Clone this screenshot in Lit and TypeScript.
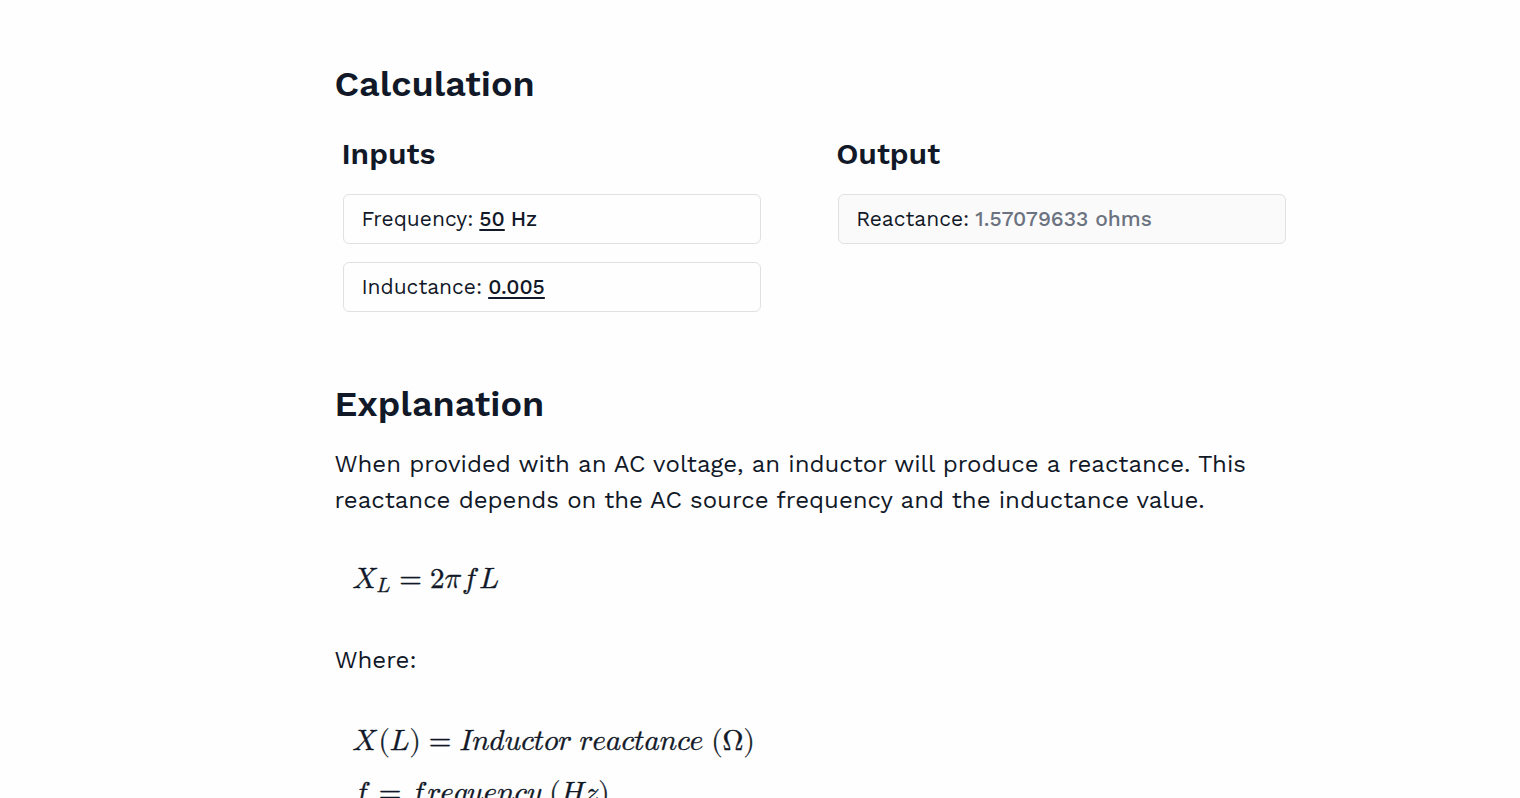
import { LitElement, html, css } from "lit";
import { customElement, state } from "lit/decorators.js";

const MATHML = "http://www.w3.org/1998/Math/MathML";

/** Builds an element in the MathML namespace. */
function mathElement(name: string, attributes: Record<string, string> = {}, text = "") {
  const element = document.createElementNS(MATHML, name);
  for (const [key, value] of Object.entries(attributes)) element.setAttribute(key, value);
  element.textContent = text;
  return element;
}

/** Sets a word as a run of italic identifiers; "f" gets room for its overhang. */
function word(text: string) {
  const row = mathElement("mrow");
  for (const letter of text) {
    if (letter === "f") row.append(mathElement("mspace", { width: "1px" }));
    row.append(mathElement("mi", {}, letter));
    if (letter === "f") row.append(mathElement("mspace", { width: "3px" }));
  }
  return row;
}

@customElement("app-root")
export class AppRoot extends LitElement {
  @state() private frequency = "50";
  @state() private inductance = "0.005";

  static styles = css`
    :host {
      display: block;
      min-height: 100vh;
      background: #fefefe;
      color: #111827;
      font-family: "Work Sans", Inter, "Liberation Sans", sans-serif;
      font-size: 24px;
      line-height: 36px;
    }
    main {
      padding: 60px 15% 40px 22%;
    }
    h2,
    h3,
    p {
      margin: 0;
    }
    h2 {
      font-size: 36px;
      line-height: 48px;
      font-weight: 600;
    }
    h3 {
      margin-bottom: 20px;
      font-size: 30px;
      line-height: 40px;
      font-weight: 600;
    }
    .calculation {
      display: grid;
      grid-template-columns: 14fr 15fr;
      column-gap: 73px;
      padding: 26px 4px 0 7px;
      margin-bottom: 68px;
    }
    .fields {
      display: flex;
      flex-direction: column;
      gap: 18px;
      margin: 0 2px;
    }
    .field {
      display: flex;
      align-items: center;
      gap: 6px;
      padding: 9px 17px;
      border: 1px solid #e0e1e4;
      border-radius: 6px;
      font-size: 21px;
      line-height: 30px;
    }
    .result {
      background: #fafafa;
    }
    .field input {
      field-sizing: content;
      min-width: 0;
      padding: 0;
      border: 0;
      outline: 0;
      background: none;
      color: inherit;
      font: inherit;
      font-weight: 500;
      text-decoration: underline;
      text-decoration-thickness: 2px;
      text-underline-offset: 3px;
    }
    .unit {
      font-weight: 500;
    }
    .field output {
      color: #6b7280;
      font-weight: 500;
    }
    .intro {
      padding-top: 18px;
    }
    .formulas {
      display: flex;
      flex-direction: column;
      align-items: flex-start;
      gap: 22px;
      padding: 50px 18px 54px;
      font-size: 29px;
    }
    .formulas math {
      font-family: "Latin Modern Math", "Liberation Serif", math;
      -webkit-text-stroke: 0.4px currentColor;
    }
  `;

  private get reactance() {
    const value = 2 * Math.PI * Number(this.frequency) * Number(this.inductance);
    return Number.isFinite(value) ? value.toFixed(8) : "–";
  }

  render() {
    return html`
      <main>
        <section>
          <h2>Calculation</h2>
          <div class="calculation">
            <div>
              <h3>Inputs</h3>
              <div class="fields">
                <div class="field">
                  <label for="frequency">Frequency:</label>
                  <input
                    id="frequency"
                    inputmode="decimal"
                    .value=${this.frequency}
                    @input=${(e: InputEvent) => (this.frequency = (e.target as HTMLInputElement).value)}
                  />
                  <span class="unit">Hz</span>
                </div>
                <div class="field">
                  <label for="inductance">Inductance:</label>
                  <input
                    id="inductance"
                    inputmode="decimal"
                    .value=${this.inductance}
                    @input=${(e: InputEvent) => (this.inductance = (e.target as HTMLInputElement).value)}
                  />
                </div>
              </div>
            </div>
            <div>
              <h3>Output</h3>
              <div class="fields">
                <div class="field result">
                  <label for="reactance">Reactance:</label>
                  <output id="reactance">${this.reactance} ohms</output>
                </div>
              </div>
            </div>
          </div>
        </section>
        <section>
          <h2>Explanation</h2>
          <p class="intro">
            When provided with an AC voltage, an inductor will produce a reactance. This reactance
            depends on the AC source frequency and the inductance value.
          </p>
          <div class="formulas">
            <math>
              <mi>X</mi><mpadded voffset="-4px"><mstyle scriptlevel="1"><mi>L</mi></mstyle></mpadded><mspace width="1px"></mspace>
              <mo>=</mo><mn>2</mn><mi>π</mi>${word("fL")}
            </math>
          </div>
          <p>Where:</p>
          <div class="formulas">
            <math>
              <mi>X</mi><mspace width="2px"></mspace><mo stretchy="false">(</mo><mi>L</mi><mo stretchy="false">)</mo><mo>=</mo>
              ${word("Inductor")}<mspace width="8px"></mspace>${word("reactance")}<mspace width="8px"></mspace>
              <mo stretchy="false">(</mo><mi mathvariant="normal">Ω</mi><mo stretchy="false">)</mo>
            </math>
            <math>
              ${word("f")}<mo>=</mo>${word("frequency")}<mspace width="8px"></mspace>
              <mo stretchy="false">(</mo>${word("Hz")}<mo stretchy="false">)</mo>
            </math>
          </div>
        </section>
      </main>
    `;
  }
}
